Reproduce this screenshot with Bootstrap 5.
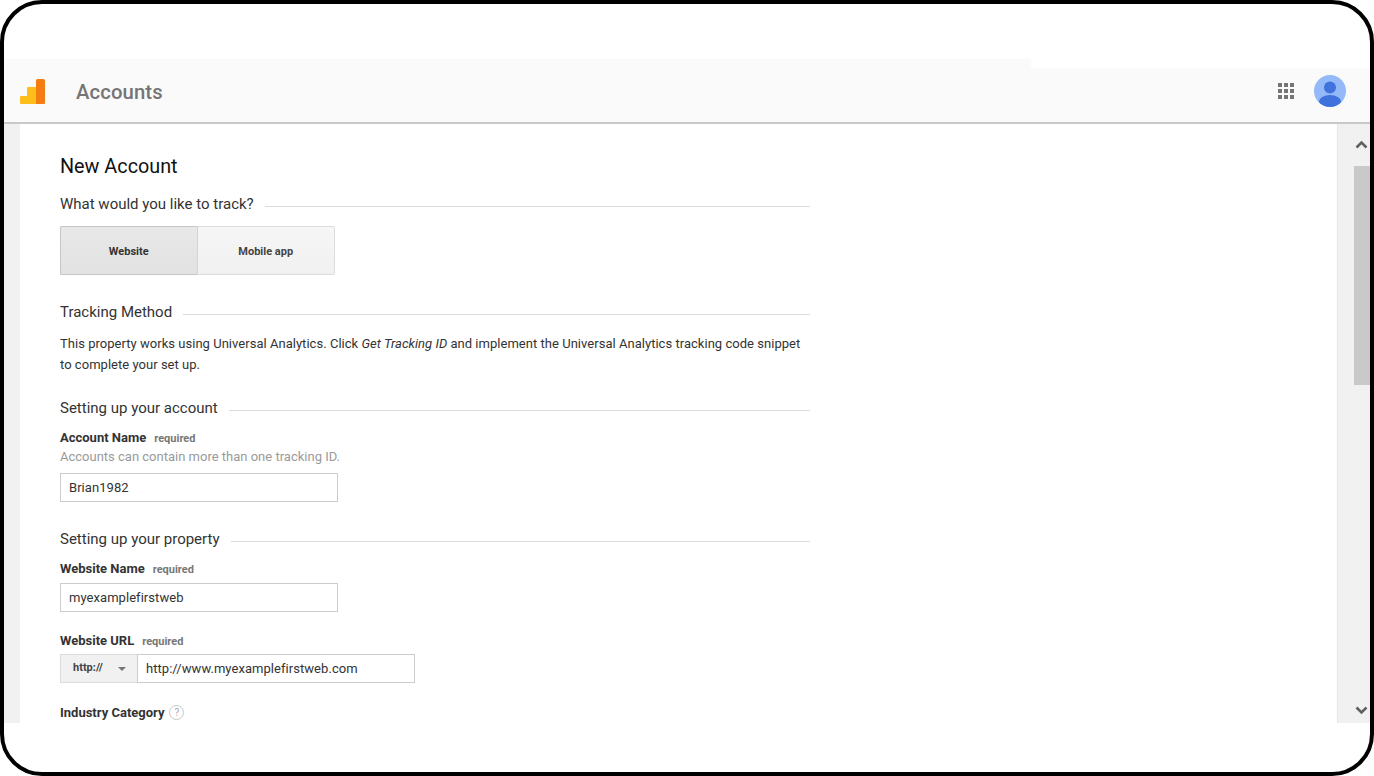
<!DOCTYPE html>
<html lang="en">
<head>
<meta charset="utf-8">
<title>Accounts</title>
<link href="https://cdn.jsdelivr.net/npm/bootstrap@5.3.0/dist/css/bootstrap.min.css" rel="stylesheet">
<style>
html,body{height:776px;overflow:hidden;background:#fff}
body{font-family:Roboto,"Liberation Sans",sans-serif;color:#333;font-size:13px;position:relative}
.device-frame{position:absolute;inset:0;border:4px solid #000;border-radius:42px;pointer-events:none;z-index:5}
.app{padding:59px 4px 0 4px;height:723px;display:flex;flex-direction:column}
.topbar{height:65px;flex:none;background:#fafafa;border-bottom:2px solid #c9c9c9;position:relative;padding:0 24px 0 15px}
.topbar::before{content:"";position:absolute;left:1027px;right:0;top:0;height:9px;background:#fff}
.topbar-title{font-size:20.300px;font-weight:500;color:#757575;margin-left:31px;line-height:1;padding-top:3px;letter-spacing:.1px}
.logo-mark{margin-top:3px}
.waffle{display:grid;grid-template-columns:repeat(3,4px);gap:2px;margin-right:20px;margin-top:1px}
.waffle i{width:4px;height:4px;background:#757575;display:block}
.avatar-pic{display:block;margin-top:1px}
.body-row{flex:1;min-height:0;overflow:hidden}
.gutter{width:16px;background:#f1f1f1;flex:none}
.content{flex:1;padding:30px 0 0 40px;overflow:hidden}
.scroll-rail{width:33px;flex:none;background:#f1f1f1;border-left:1px solid #e6e6e6;position:relative}
.scroll-thumb{position:absolute;left:16px;right:0;top:42px;height:219px;background:#c9c9c9}
.scroll-up{position:absolute;left:17px;top:16px}
.scroll-down{position:absolute;left:17px;bottom:8px}
.form-col{width:750px}
.page-title{font-size:19.800px;font-weight:400;color:#111;line-height:26px;margin:0}
.sect{display:flex;align-items:center;gap:11px;font-size:15px;font-weight:400;color:#333;line-height:20px;margin:0}
.sect::after{content:"";flex:1;border-top:1px solid #dcdcdc;margin-top:5px}
.sect-track{margin-top:14px}
.choice{display:inline-flex;margin-top:12px;height:49px}
.choice span{width:137.5px;display:flex;align-items:center;justify-content:center;padding-top:3px;font-size:11px;font-weight:700;color:#444;border:1px solid #dcdcdc;background:linear-gradient(#f6f6f6,#f1f1f1)}
.choice span:first-child{background:linear-gradient(#e8e8e8,#e2e2e2);border-color:#c6c6c6;border-right:1px solid #d4d4d4;border-radius:2px 0 0 2px;color:#333}
.choice span:last-child{border-left:0;border-radius:0 2px 2px 0}
.sect-method{margin-top:27px}
.para{font-size:13px;line-height:20.600px;color:#333;margin:12px 0 0;letter-spacing:.03px}
.sect-account{margin-top:22.800px}
.sect-property{margin-top:27px}
.fld-label{font-size:13px;font-weight:700;color:#333;line-height:16px;display:flex;align-items:baseline;gap:8px}
.fld-label small{font-size:11px;font-weight:700;color:#777}
.hint{font-size:13px;color:#9a9a9a;line-height:20px}
.txt{display:block;width:278px;height:29px;border:1px solid #ccc;padding:0 8px;font-size:13px;line-height:27px;color:#333;background:#fff;letter-spacing:.05px}
.input-gap{margin-top:5px}
.input-gap-lg{margin-top:6px}
.label-gap{margin-top:21px}
.url-row{display:flex;width:355px;height:29px;margin-top:4px}
.scheme{width:77px;flex:none;background:#f1f1f1;border:1px solid #dcdcdc;border-right:0;display:flex;align-items:center;padding-left:12px;gap:15px;font-size:11px;font-weight:700;color:#444}
.scheme::after{content:"";border:4px solid transparent;border-top-color:#777;border-bottom:0;margin-top:2px}
.url-row .txt{flex:1;width:auto}
.industry{margin-top:22px;gap:5px;align-items:center}
.help-dot{width:15px;height:15px;border:1px solid #c8c8c8;border-radius:50%;font-size:10px;font-weight:400;color:#aaa;display:inline-flex;align-items:center;justify-content:center;line-height:1}
</style>
</head>
<body>
<div class="device-frame"></div>
<div class="app">
  <header class="topbar d-flex align-items-center">
    <svg class="logo-mark" width="26" height="26" viewBox="0 0 26 26" aria-hidden="true">
      <path d="M1 18a1 1 0 0 1 1-1h6V9a1 1 0 0 1 1-1h8v17H2a1 1 0 0 1-1-1z" fill="#fdbd1a"/>
      <path d="M17 1.500A1.500 1.500 0 0 1 18.500 0h6A1.500 1.500 0 0 1 26 1.500V24a1 1 0 0 1-1 1h-8z" fill="#f47d12"/>
    </svg>
    <div class="topbar-title">Accounts</div>
    <div class="ms-auto d-flex align-items-center">
      <div class="waffle"><i></i><i></i><i></i><i></i><i></i><i></i><i></i><i></i><i></i></div>
      <svg class="avatar-pic" width="32" height="32" viewBox="0 0 32 32" aria-hidden="true">
        <defs><clipPath id="av"><circle cx="16" cy="16" r="16"/></clipPath></defs>
        <circle cx="16" cy="16" r="16" fill="#93b9f8"/>
        <g clip-path="url(#av)" fill="#3f72dc">
          <circle cx="16" cy="12.500" r="6"/>
          <ellipse cx="16" cy="26.500" rx="11" ry="6.500"/>
        </g>
      </svg>
    </div>
  </header>
  <div class="body-row d-flex">
    <div class="gutter"></div>
    <main class="content">
      <div class="form-col">
        <h1 class="page-title">New Account</h1>
        <h2 class="sect sect-track">What would you like to track?</h2>
        <div class="choice"><span>Website</span><span>Mobile app</span></div>
        <h2 class="sect sect-method">Tracking Method</h2>
        <p class="para">This property works using Universal Analytics. Click <em>Get Tracking ID</em> and implement the Universal Analytics tracking code snippet to complete your set up.</p>
        <h2 class="sect sect-account">Setting up your account</h2>
        <div class="fld-label mt-2 pt-1">Account Name <small>required</small></div>
        <div class="hint">Accounts can contain more than one tracking ID.</div>
        <div class="txt input-gap-lg">Brian1982</div>
        <h2 class="sect sect-property">Setting up your property</h2>
        <div class="fld-label mt-2 pt-1">Website Name <small>required</small></div>
        <div class="txt input-gap">myexamplefirstweb</div>
        <div class="fld-label label-gap">Website URL <small>required</small></div>
        <div class="url-row"><div class="scheme">http://</div><div class="txt">http://www.myexamplefirstweb.com</div></div>
        <div class="fld-label industry">Industry Category <span class="help-dot">?</span></div>
      </div>
    </main>
    <aside class="scroll-rail">
      <svg class="scroll-up" width="13" height="9" viewBox="0 0 13 9" aria-hidden="true"><path d="M1.500 7.500l5-5 5 5" fill="none" stroke="#616161" stroke-width="2.600"/></svg>
      <div class="scroll-thumb"></div>
      <svg class="scroll-down" width="13" height="9" viewBox="0 0 13 9" aria-hidden="true"><path d="M1.500 1.500l5 5 5-5" fill="none" stroke="#616161" stroke-width="2.600"/></svg>
    </aside>
  </div>
</div>
<script src="https://cdn.jsdelivr.net/npm/bootstrap@5.3.0/dist/js/bootstrap.bundle.min.js"></script>
</body>
</html>
